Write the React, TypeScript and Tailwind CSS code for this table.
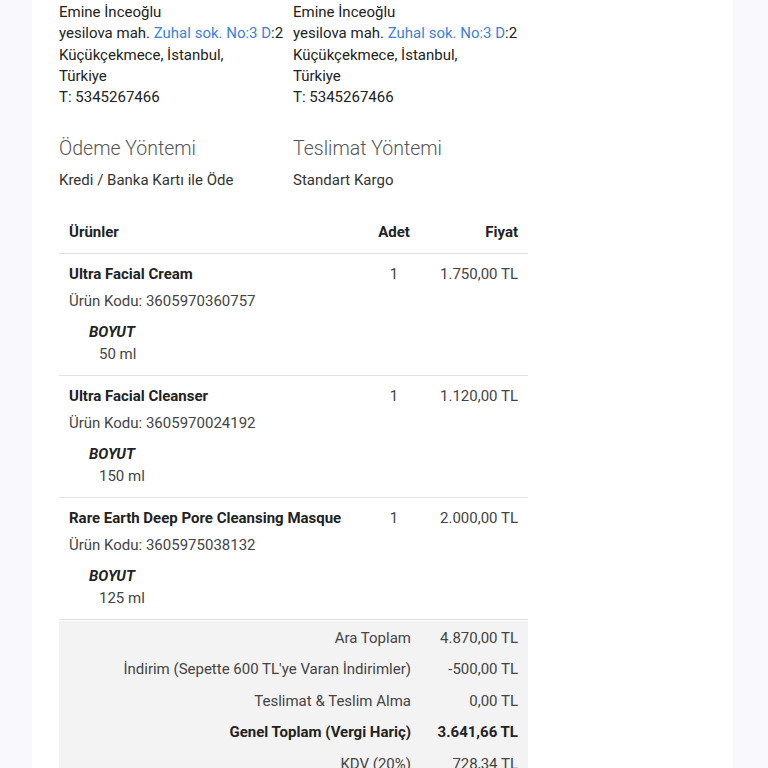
const address = [
  "Emine İnceoğlu",
  "yesilova mah. ",
  "Küçükçekmece, İstanbul,",
  "Türkiye",
];

const products = [
  { name: "Ultra Facial Cream", code: "3605970360757", qty: 1, price: "1.750,00 TL", size: "50 ml" },
  { name: "Ultra Facial Cleanser", code: "3605970024192", qty: 1, price: "1.120,00 TL", size: "150 ml" },
  { name: "Rare Earth Deep Pore Cleansing Masque", code: "3605975038132", qty: 1, price: "2.000,00 TL", size: "125 ml" },
];

const totals = [
  { label: "Ara Toplam", value: "4.870,00 TL" },
  { label: "İndirim (Sepette 600 TL'ye Varan İndirimler)", value: "-500,00 TL" },
  { label: "Teslimat & Teslim Alma", value: "0,00 TL" },
  { label: "Genel Toplam (Vergi Hariç)", value: "3.641,66 TL", bold: true },
  { label: "KDV (20%)", value: "728,34 TL" },
];

function Address() {
  return (
    <div className="w-[234px] text-[15px] leading-[21.25px] text-[#222]">
      <div>{address[0]}</div>
      <div>
        {address[1]}
        <span className="text-[#3d7fd9]">Zuhal sok. No:3 D</span>:2
      </div>
      <div>{address[2]}</div>
      <div>{address[3]}</div>
      <div>T: 5345267466</div>
    </div>
  );
}

export default function App() {
  return (
    <div className="h-[768px] bg-[#f8f8fd] font-['Roboto',sans-serif] overflow-hidden">
      <div className="ml-[32px] w-[701px] min-h-[768px] bg-white pl-[27px] pt-[2px]">
        <div className="flex">
          <Address />
          <Address />
        </div>

        <div className="flex mt-[28px]">
          <div className="w-[234px]">
            <h2 className="text-[19.5px] font-light text-[#555] leading-[26px]">Ödeme Yöntemi</h2>
            <p className="mt-[8px] text-[15px] text-[#333] leading-[20px]">Kredi / Banka Kartı ile Öde</p>
          </div>
          <div className="w-[234px]">
            <h2 className="text-[19.5px] font-light text-[#555] leading-[26px]">Teslimat Yöntemi</h2>
            <p className="mt-[8px] text-[15px] text-[#333] leading-[20px]">Standart Kargo</p>
          </div>
        </div>

        <div className="w-[469px] mt-[20px] text-[15px] text-[#222]">
          <div className="flex items-center h-[44px] px-[10px] font-bold border-b border-[#e2e2e2]">
            <div className="flex-1">Ürünler</div>
            <div className="w-[60px] text-center">Adet</div>
            <div className="w-[94px] text-right">Fiyat</div>
          </div>

          {products.map((p) => (
            <div key={p.code} className="flex px-[10px] pt-[9px] h-[122px] border-b border-[#e2e2e2]">
              <div className="flex-1">
                <div className="font-bold leading-[22px]">{p.name}</div>
                <div className="mt-[5px] text-[#444] leading-[22px]">Ürün Kodu: {p.code}</div>
                <div className="mt-[9px] pl-[20px] font-bold italic leading-[22px]">BOYUT</div>
                <div className="pl-[30px] text-[#444] leading-[22px]">{p.size}</div>
              </div>
              <div className="w-[60px] text-center leading-[22px] text-[#444]">{p.qty}</div>
              <div className="w-[94px] text-right leading-[22px] text-[#444]">{p.price}</div>
            </div>
          ))}

          <div className="bg-[#f3f3f3] mt-[1px] pt-[1px] pb-[4px] px-[10px]">
            {totals.map((t) => (
              <div key={t.label} className={`flex h-[31.5px] items-center ${t.bold ? "font-bold text-[#222]" : "text-[#444]"}`}>
                <div className="flex-1 text-right">{t.label}</div>
                <div className="w-[107px] text-right">{t.value}</div>
              </div>
            ))}
          </div>
        </div>
      </div>
    </div>
  );
}
